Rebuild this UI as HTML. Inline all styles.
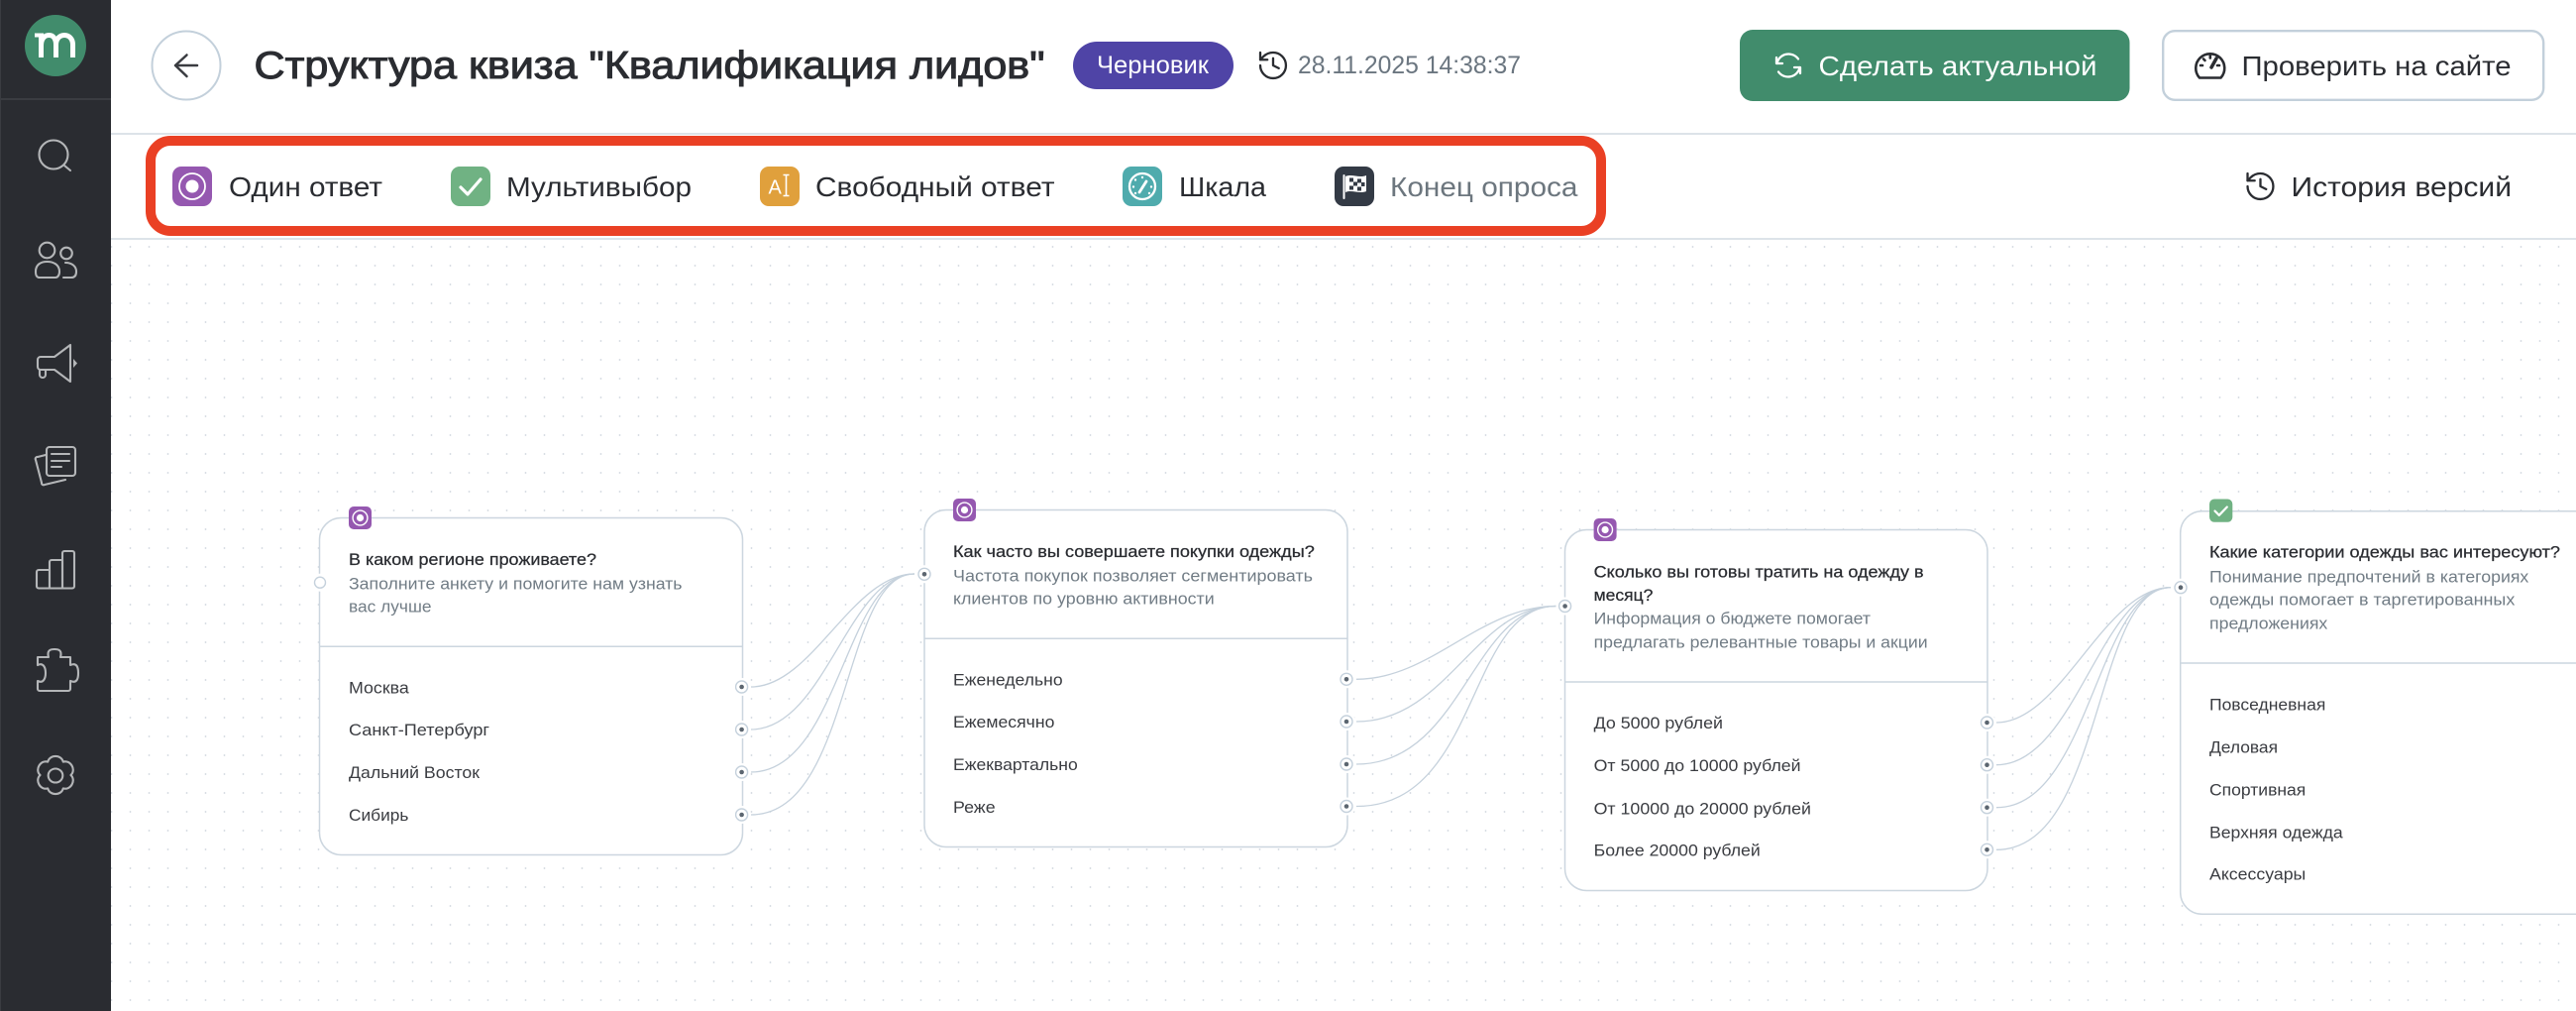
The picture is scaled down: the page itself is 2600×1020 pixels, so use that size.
<!DOCTYPE html>
<html lang="ru">
<head>
<meta charset="utf-8">
<title>Структура квиза</title>
<style>
html,body{margin:0;padding:0;background:#fff;width:2600px;height:1020px;overflow:hidden}
svg{display:block;font-family:"Liberation Sans","Noto Sans CJK SC",sans-serif}
.h{font-size:39px;fill:#2a2c31;stroke:#2a2c31;stroke-width:1}
.m{font-size:28px;fill:#2a2c31}
.s{font-size:25px;fill:#6b7680}
.q{font-size:16.5px;fill:#2a2c31;stroke:#2a2c31;stroke-width:.25}
.d{font-size:16.5px;fill:#717c85}
.o{font-size:16.5px;fill:#3a3c41}
.edge{fill:none;stroke:#c5d1dc;stroke-width:1.3}
.card{fill:#fff;stroke:#ccd6df;stroke-width:1.5}
.div{stroke:#ccd6df;stroke-width:1.5}
.side{fill:none;stroke:#b4b6b8;stroke-width:2.1;stroke-linejoin:round;stroke-linecap:round}
</style>
</head>
<body>
<svg width="2600" height="1020" viewBox="0 0 2600 1020" xmlns="http://www.w3.org/2000/svg">
<defs>
<pattern id="dots" patternUnits="userSpaceOnUse" x="8" y="-7.5" width="19" height="19">
<circle cx="9.5" cy="9.5" r=".9" fill="#cfd6dd"/>
</pattern>
<g id="radioS"><rect width="23" height="23" rx="5" fill="#9558b0"/><circle cx="11.5" cy="11.5" r="7.4" fill="none" stroke="#fff" stroke-width="1.4"/><circle cx="11.5" cy="11.5" r="3.6" fill="#fff"/></g>
<g id="handle"><circle r="9" fill="#fff"/><circle r="6" fill="#fff" stroke="#c5d1dc" stroke-width="1.4"/><circle r="2.3" fill="#5c6670"/></g>
<g id="hist" fill="none" stroke-linecap="round" stroke-linejoin="round" stroke-width="1.6"><path d="M3 12a9 9 0 1 0 9-9 9.75 9.75 0 0 0-6.74 2.74L3 8"/><path d="M3 3v5h5"/><path d="M12 7v5l4 2"/></g>
</defs>

<rect width="2600" height="1020" fill="#fff"/>
<rect x="112" y="242" width="2488" height="778" fill="url(#dots)"/>

<!-- header lines -->
<rect x="112" y="134" width="2488" height="2" fill="#dde3e9"/>
<rect x="112" y="240" width="2488" height="2" fill="#dde3e9"/>

<!-- sidebar -->
<rect width="112" height="1020" fill="#2a2c31"/>
<rect width="1" height="1020" fill="#3a3c41"/>
<rect y="99" width="112" height="2" fill="#3a3c41"/>
<circle cx="56" cy="46" r="31" fill="#418c6c"/>
<rect x="35" y="33.500" width="6" height="4" fill="#fff"/>
<g fill="none" stroke="#fff" stroke-width="5">
<path d="M41.500 33.500V58"/>
<path d="M41.500 46C41.500 39 45 35.500 49.500 35.500C54 35.500 56.500 39.500 56.500 45V58"/>
<path d="M56.500 45C56.500 39.500 60 35.500 65 35.500C70 35.500 73.500 39.500 73.500 45V58"/>
</g>
<g class="side">
<circle cx="54" cy="156" r="14.500"/><path d="M65 167L71 172"/>
<circle cx="47.500" cy="252.500" r="7.800"/><path d="M36 274C36 267 41 264 47.500 264C54 264 60 267 60 274C60 278 58 280 56 280H40C37 280 36 278 36 274Z"/>
<circle cx="67" cy="255.500" r="5.800"/><path d="M64 280H72C76 280 77 277 77 274C77 269 73 265 66 265"/>
<path d="M41 360H55L71 348V385L55 373H41A3 3 0 0 1 38 370V363A3 3 0 0 1 41 360Z"/><path d="M40 373V378A3 3 0 0 0 43 381A3 3 0 0 0 46 378V374"/>
<rect x="47" y="451" width="29" height="29" rx="3"/><path d="M52 458H70M52 465H70M52 471H62"/><path d="M46 459L38 461A2 2 0 0 0 36 464L42 487A2 2 0 0 0 45 489L66 484"/>
<path d="M39 575H50V593.500H39A2 2 0 0 1 37 591.500V577A2 2 0 0 1 39 575Z"/><path d="M50 567A2 2 0 0 1 52 565H63V593.500H50Z"/><path d="M63 558A2 2 0 0 1 65 556H73A2 2 0 0 1 75 558V591.500A2 2 0 0 1 73 593.500H63Z"/>
<path d="M38 663H49C47 656 51 655 55 655C59 655 63 656 61 663H71V671C78 668 79 674 79 679C79 684 78 690 71 687V695A2 2 0 0 1 69 697H40A2 2 0 0 1 38 695V687C44 690 46 684 46 679C46 674 44 668 38 671Z"/>
<path d="M48.250 768.600C50 761 62 761 63.750 768.600C71.200 766.300 77.200 776.700 71.500 782C77.200 787.300 71.200 797.700 63.750 795.400C62 803 50 803 48.250 795.400C40.800 797.700 34.800 787.300 40.500 782C34.800 776.700 40.800 766.300 48.250 768.600Z"/><ellipse cx="56" cy="782.500" rx="7.300" ry="7"/>
</g>
<path d="M74 362L78 366.500L74 371Z" fill="#b4b6b8"/>

<!-- top bar -->
<circle cx="188" cy="66" r="34.500" fill="#fff" stroke="#c3d0db" stroke-width="2"/>
<path d="M188.500 55.500L177 66L188.500 77M177 66H199" fill="none" stroke="#3a3c41" stroke-width="2.500" stroke-linecap="round" stroke-linejoin="round"/>
<text x="256.500" y="79" class="h" textLength="798" lengthAdjust="spacingAndGlyphs">Структура квиза "Квалификация лидов"</text>
<rect x="1083" y="42" width="162" height="48" rx="24" fill="#4f44a6"/>
<text x="1107" y="74" font-size="25" fill="#fff" textLength="113" lengthAdjust="spacingAndGlyphs">Черновик</text>
<use href="#hist" transform="translate(1267.700 48.700) scale(1.44)" stroke="#2a2c31"/>
<text x="1310" y="74" class="s" textLength="225" lengthAdjust="spacingAndGlyphs">28.11.2025 14:38:37</text>

<rect x="1756" y="30" width="393.500" height="72" rx="13" fill="#418c6c"/>
<g fill="none" stroke="#fff" stroke-width="2.300" stroke-linecap="round" stroke-linejoin="round">
<path d="M1793 58V64H1799"/><path d="M1793.500 64A12 12 0 0 1 1815 59.500"/>
<path d="M1817 74V68H1811"/><path d="M1816.500 68A12 12 0 0 1 1795 72.500"/>
</g>
<text x="1835.500" y="76" font-size="28" fill="#fff" textLength="281" lengthAdjust="spacingAndGlyphs">Сделать актуальной</text>

<rect x="2183.200" y="31.200" width="384" height="69.600" rx="12" fill="#fff" stroke="#c3d0db" stroke-width="2.400"/>
<g fill="none" stroke="#2a2c31" stroke-width="2.600" stroke-linecap="round" stroke-linejoin="round">
<path d="M2220 78.500A14.500 14.500 0 1 1 2241.500 78.500Z"/><path d="M2232 68L2237 59" stroke-width="3.500"/>
<path d="M2221 66H2223M2238 66H2240M2230.800 56.500V58.500M2224 59.500L2225.500 61"/>
</g>
<text x="2262.500" y="76" class="m" textLength="272" lengthAdjust="spacingAndGlyphs">Проверить на сайте</text>

<!-- toolbar items -->
<rect x="174" y="168" width="40" height="40" rx="9" fill="#9558b0"/>
<circle cx="194" cy="188" r="13" fill="none" stroke="#fff" stroke-width="1.800"/><circle cx="194" cy="188" r="6.500" fill="#fff"/>
<text x="231" y="198" class="m" textLength="155" lengthAdjust="spacingAndGlyphs">Один ответ</text>

<rect x="455" y="168" width="40" height="40" rx="9" fill="#70b283"/>
<path d="M465 189L472 196L485 181" fill="none" stroke="#fff" stroke-width="3.200" stroke-linecap="round" stroke-linejoin="round"/>
<text x="511" y="198" class="m" textLength="187" lengthAdjust="spacingAndGlyphs">Мультивыбор</text>

<rect x="767" y="168" width="40" height="40" rx="9" fill="#e0a03c"/>
<text x="775.500" y="195.500" font-size="20" fill="#fff">A</text>
<path d="M790.500 176.500H796.500M793.500 176.500V197.500M790.500 197.500H796.500" fill="none" stroke="#fff" stroke-width="1.600"/>
<text x="823" y="198" class="m" textLength="241.500" lengthAdjust="spacingAndGlyphs">Свободный ответ</text>

<rect x="1133" y="168" width="40" height="40" rx="9" fill="#4fabad"/>
<circle cx="1153" cy="188" r="13" fill="none" stroke="#fff" stroke-width="2.300"/>
<path d="M1150 194L1157 183" stroke="#fff" stroke-width="2.800" stroke-linecap="round"/>
<g fill="#fff"><circle cx="1146" cy="181.500" r="1.200"/><circle cx="1153" cy="179" r="1.200"/><circle cx="1144" cy="188.500" r="1.200"/><circle cx="1162" cy="188.500" r="1.200"/><circle cx="1146" cy="195" r="1.200"/><circle cx="1160" cy="195" r="1.200"/></g>
<text x="1190" y="198" class="m" textLength="88" lengthAdjust="spacingAndGlyphs">Шкала</text>

<rect x="1347" y="168" width="40" height="40" rx="9" fill="#333a45"/>
<path d="M1356.500 200V177" stroke="#fff" stroke-width="2" stroke-linecap="round"/>
<path d="M1358 178C1364 175 1372 180 1379 177V193C1372 196 1364 191 1358 194Z" fill="#fff"/>
<g fill="#333a45"><rect x="1362" y="179.500" width="4" height="4"/><rect x="1370" y="180.500" width="4" height="4"/><rect x="1366" y="183.500" width="4" height="4"/><rect x="1374" y="184" width="3.500" height="4"/><rect x="1362" y="187.500" width="4" height="4"/><rect x="1370" y="188.500" width="4" height="4"/></g>
<text x="1403" y="198" font-size="28" fill="#6c767e" textLength="189.500" lengthAdjust="spacingAndGlyphs">Конец опроса</text>

<rect x="152" y="142" width="1464" height="91" rx="20" fill="none" stroke="#ea4024" stroke-width="10"/>

<use href="#hist" transform="translate(2264.200 170.700) scale(1.44)" stroke="#2a2c31"/>
<text x="2312.500" y="198" class="m" textLength="222.500" lengthAdjust="spacingAndGlyphs">История версий</text>

<!-- edges -->
<g class="edge">
<path d="M758 693C820 693 860 579 923 579"/>
<path d="M758 736C833 736 856 579 923 579"/>
<path d="M758 779C847 779 853 579 923 579"/>
<path d="M758 822C860 822 849 579 923 579"/>
<path d="M1369 685.300C1444.600 685.300 1494 611.500 1570.500 611.500"/>
<path d="M1369 728C1461 728 1489 611.500 1570.500 611.500"/>
<path d="M1369 771C1477 771 1485 611.500 1570.500 611.500"/>
<path d="M1369 813.500C1494 813.500 1480 611.500 1570.500 611.500"/>
<path d="M2015 729C2081 729 2124 592.700 2191 592.700"/>
<path d="M2015 771.700C2095 771.700 2120 592.700 2191 592.700"/>
<path d="M2015 814.700C2110 814.700 2116 592.700 2191 592.700"/>
<path d="M2015 857.300C2124 857.300 2112 592.700 2191 592.700"/>
</g>

<!-- card 1 -->
<rect class="card" x="322.500" y="522.500" width="427" height="340" rx="22"/>
<line class="div" x1="322.500" x2="749.500" y1="652.300" y2="652.300"/>
<use href="#radioS" x="352" y="511"/>
<text x="352" y="570" class="q" textLength="250" lengthAdjust="spacingAndGlyphs">В каком регионе проживаете?</text>
<text x="352" y="594.300" class="d" textLength="336.500" lengthAdjust="spacingAndGlyphs">Заполните анкету и помогите нам узнать</text>
<text x="352" y="617.300" class="d" textLength="83.500" lengthAdjust="spacingAndGlyphs">вас лучше</text>
<text x="352" y="699.300" class="o" textLength="60.800" lengthAdjust="spacingAndGlyphs">Москва</text>
<text x="352" y="742" class="o" textLength="142" lengthAdjust="spacingAndGlyphs">Санкт-Петербург</text>
<text x="352" y="785" class="o" textLength="132" lengthAdjust="spacingAndGlyphs">Дальний Восток</text>
<text x="352" y="828" class="o" textLength="60.400" lengthAdjust="spacingAndGlyphs">Сибирь</text>
<circle cx="323" cy="587.700" r="9" fill="#fff"/><circle cx="323" cy="587.700" r="5.500" fill="#fff" stroke="#c5d1dc" stroke-width="1.400"/>
<use href="#handle" x="748.600" y="693"/><use href="#handle" x="748.600" y="736"/><use href="#handle" x="748.600" y="779"/><use href="#handle" x="748.600" y="822"/>

<!-- card 2 -->
<rect class="card" x="933" y="514.500" width="427" height="340" rx="22"/>
<line class="div" x1="933" x2="1360" y1="644.300" y2="644.300"/>
<use href="#radioS" x="962" y="503"/>
<text x="962" y="562" class="q" textLength="364.800" lengthAdjust="spacingAndGlyphs">Как часто вы совершаете покупки одежды?</text>
<text x="962" y="586.700" class="d" textLength="363" lengthAdjust="spacingAndGlyphs">Частота покупок позволяет сегментировать</text>
<text x="962" y="609.700" class="d" textLength="263.700" lengthAdjust="spacingAndGlyphs">клиентов по уровню активности</text>
<text x="962" y="691.300" class="o" textLength="110.600" lengthAdjust="spacingAndGlyphs">Еженедельно</text>
<text x="962" y="734" class="o" textLength="102.400" lengthAdjust="spacingAndGlyphs">Ежемесячно</text>
<text x="962" y="777" class="o" textLength="125.800" lengthAdjust="spacingAndGlyphs">Ежеквартально</text>
<text x="962" y="820" class="o" textLength="42.600" lengthAdjust="spacingAndGlyphs">Реже</text>
<use href="#handle" x="933" y="579.300"/>
<use href="#handle" x="1359" y="685.300"/><use href="#handle" x="1359" y="728"/><use href="#handle" x="1359" y="771"/><use href="#handle" x="1359" y="813.500"/>

<!-- card 3 -->
<rect class="card" x="1579.500" y="534.500" width="426.500" height="364" rx="22"/>
<line class="div" x1="1579.500" x2="2006" y1="688" y2="688"/>
<use href="#radioS" x="1608.600" y="523"/>
<text x="1608.600" y="582.300" class="q" textLength="333" lengthAdjust="spacingAndGlyphs">Сколько вы готовы тратить на одежду в</text>
<text x="1608.600" y="606" class="q" textLength="59.800" lengthAdjust="spacingAndGlyphs">месяц?</text>
<text x="1608.600" y="629.300" class="d" textLength="279.400" lengthAdjust="spacingAndGlyphs">Информация о бюджете помогает</text>
<text x="1608.600" y="653.300" class="d" textLength="337" lengthAdjust="spacingAndGlyphs">предлагать релевантные товары и акции</text>
<text x="1608.600" y="735" class="o" textLength="130.400" lengthAdjust="spacingAndGlyphs">До 5000 рублей</text>
<text x="1608.600" y="778" class="o" textLength="209" lengthAdjust="spacingAndGlyphs">От 5000 до 10000 рублей</text>
<text x="1608.600" y="821.300" class="o" textLength="219.400" lengthAdjust="spacingAndGlyphs">От 10000 до 20000 рублей</text>
<text x="1608.600" y="863.300" class="o" textLength="168.200" lengthAdjust="spacingAndGlyphs">Более 20000 рублей</text>
<use href="#handle" x="1579.600" y="611.500"/>
<use href="#handle" x="2005.500" y="729"/><use href="#handle" x="2005.500" y="771.700"/><use href="#handle" x="2005.500" y="814.700"/><use href="#handle" x="2005.500" y="857.300"/>

<!-- card 4 -->
<rect class="card" x="2200.700" y="515.700" width="460" height="406.600" rx="22"/>
<line class="div" x1="2200.700" x2="2600" y1="669" y2="669"/>
<rect x="2230" y="503.500" width="23.300" height="23.300" rx="5" fill="#70b283"/>
<path d="M2235.500 515.500L2239.800 519.800L2247.800 511.500" fill="none" stroke="#fff" stroke-width="2.200" stroke-linecap="round" stroke-linejoin="round"/>
<text x="2230" y="562.700" class="q" textLength="354" lengthAdjust="spacingAndGlyphs">Какие категории одежды вас интересуют?</text>
<text x="2230" y="587.300" class="d" textLength="322.300" lengthAdjust="spacingAndGlyphs">Понимание предпочтений в категориях</text>
<text x="2230" y="610.500" class="d" textLength="308.300" lengthAdjust="spacingAndGlyphs">одежды помогает в таргетированных</text>
<text x="2230" y="634.300" class="d" textLength="119.300" lengthAdjust="spacingAndGlyphs">предложениях</text>
<text x="2230" y="716.700" class="o" textLength="117.300" lengthAdjust="spacingAndGlyphs">Повседневная</text>
<text x="2230" y="759.300" class="o" textLength="69" lengthAdjust="spacingAndGlyphs">Деловая</text>
<text x="2230" y="802.300" class="o" textLength="97.300" lengthAdjust="spacingAndGlyphs">Спортивная</text>
<text x="2230" y="845.300" class="o" textLength="134.700" lengthAdjust="spacingAndGlyphs">Верхняя одежда</text>
<text x="2230" y="887.300" class="o" textLength="97.300" lengthAdjust="spacingAndGlyphs">Аксессуары</text>
<use href="#handle" x="2201" y="592.700"/>
</svg>
</body>
</html>
